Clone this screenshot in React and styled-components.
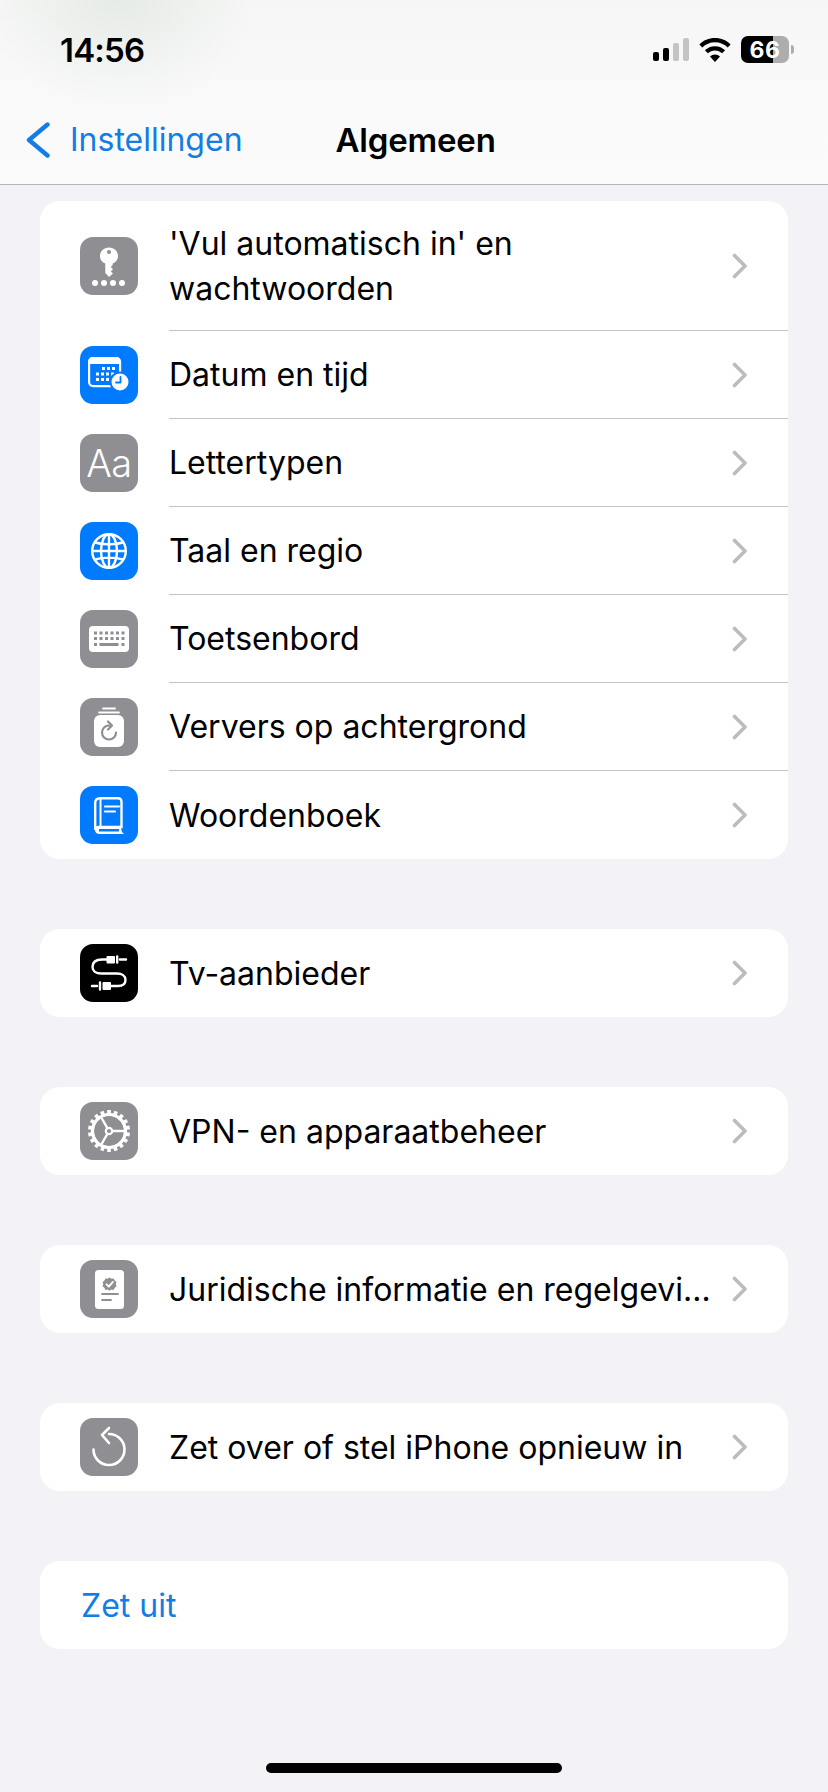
import React from 'react';
import styled, { createGlobalStyle } from 'styled-components';

const GlobalStyle = createGlobalStyle`
   html, body {
      margin: 0;
      padding: 0;
      background: #f2f2f7;
      font-family: Inter, "Liberation Sans", sans-serif;
   }
`;

const Page = styled.div`
   position: relative;
   width: 828px;
   height: 1792px;
   overflow: hidden;
   background: #f2f2f7;
`;

const Header = styled.header`
   height: 185px;
   box-sizing: border-box;
   border-bottom: 1px solid #b5b5ba;
   background:
      radial-gradient(ellipse 130px 110px at 120px 0px, rgba(208, 218, 208, 0.4), rgba(240, 243, 240, 0) 100%),
      linear-gradient(180deg, #f5f6f5 0%, #f9f9fa 50%, #fbfbfc 100%);
`;

const StatusBar = styled.div`
   height: 99px;
   box-sizing: border-box;
   padding: 0 34px 0 60px;
   display: flex;
   justify-content: space-between;
   align-items: center;
`;

const Time = styled.span`
   font-size: 33px;
   font-weight: 600;
   letter-spacing: -0.8px;
   color: #000;
`;

const StatusIcons = styled.div`
   display: flex;
   align-items: center;
   gap: 10px;
`;

const Signal = styled.div`
   display: flex;
   align-items: flex-end;
   gap: 4px;
   height: 23px;
`;

const SignalBar = styled.span`
   width: 6px;
   height: ${({ $h }) => $h}px;
   border-radius: 2px;
   background: ${({ $on }) => ($on ? '#000' : '#c4c4c4')};
`;

const Battery = styled.div`
   display: flex;
   align-items: center;
   gap: 2px;
`;

const BatteryBody = styled.div`
   width: 48px;
   height: 27px;
   border-radius: 7px;
   display: flex;
   align-items: center;
   justify-content: center;
   background: linear-gradient(90deg, #000 0%, #000 66%, #adadad 66%, #adadad 100%);
   color: #fff;
   font-size: 23px;
   font-weight: 700;
   letter-spacing: 0.5px;
`;

const BatteryTip = styled.span`
   width: 3px;
   height: 9px;
   border-radius: 0 3px 3px 0;
   background: #adadad;
`;

const NavBar = styled.nav`
   height: 85px;
   display: flex;
   align-items: center;
   padding: 0 0 4px 26px;
   box-sizing: border-box;
`;

const BackLink = styled.div`
   display: flex;
   align-items: center;
   gap: 20px;
   color: #147ce5;
   font-size: 32px;
`;

const Title = styled.h1`
   margin: 0 0 0 93px;
   font-size: 33px;
   font-weight: 600;
   letter-spacing: -0.2px;
   color: #000;
`;

const Content = styled.main`
   padding: 16px 40px 0;
   display: flex;
   flex-direction: column;
   gap: 70px;
`;

const Card = styled.section`
   background: #fff;
   border-radius: 20px;
   overflow: hidden;
`;

const Row = styled.div`
   display: flex;
   align-items: center;
   min-height: 88px;
   padding-left: 40px;
   ${({ $tall }) => $tall && 'height: 130px;'}
`;

const IconTile = styled.div`
   flex: none;
   width: 58px;
   height: 58px;
   border-radius: 13px;
   display: flex;
   align-items: center;
   justify-content: center;
   background: ${({ $bg }) => $bg};
   color: #fff;
`;

const RowBody = styled.div`
   flex: 1;
   align-self: stretch;
   margin-left: 31px;
   padding-right: 40px;
   display: flex;
   align-items: center;
   justify-content: space-between;
   border-bottom: ${({ $last }) => ($last ? 'none' : '1px solid #c6c6c8')};
`;

const Label = styled.span`
   padding-top: 2px;
   font-size: 32px;
   line-height: 44.5px;
   color: #000;
   white-space: pre-line;
`;

const ActionRow = styled.div`
   height: 88px;
   display: flex;
   align-items: center;
   padding-left: 41px;
   font-size: 32px;
   color: #147ce5;
`;

const HomeIndicator = styled.div`
   position: absolute;
   left: 266px;
   bottom: 19px;
   width: 296px;
   height: 10px;
   border-radius: 5px;
   background: #000;
`;

const AaGlyph = styled.span`
   font-size: 38px;
   font-weight: 300;
   letter-spacing: -0.5px;
`;

const Chevron = () => (
   <svg width="16" height="26" viewBox="0 0 16 26" fill="none">
      <path d="M2.5 2.5 L13 13 L2.5 23.5" stroke="#bcbcc0" strokeWidth="3.6" strokeLinecap="round" strokeLinejoin="round" />
   </svg>
);

const BackChevron = () => (
   <svg width="24" height="36" viewBox="0 0 24 36" fill="none">
      <path d="M21.5 2.5 L3 18 L21.5 33.5" stroke="#147ce5" strokeWidth="4.4" strokeLinecap="round" strokeLinejoin="round" />
   </svg>
);

const Wifi = () => (
   <svg width="32" height="24" viewBox="0 0 32 24">
      <path d="M16 0C9.8 0 4.3 2.4 0.4 6.4L3.3 9.4C6.5 6.2 11 4.2 16 4.2S25.5 6.2 28.7 9.4L31.6 6.4C27.7 2.4 22.2 0 16 0Z" fill="#000" />
      <path d="M16 8.2C12 8.2 8.5 9.8 5.9 12.3L8.9 15.3C10.7 13.5 13.2 12.4 16 12.4S21.3 13.5 23.1 15.3L26.1 12.3C23.5 9.8 20 8.2 16 8.2Z" fill="#000" />
      <path d="M16 16.4C14 16.4 12.3 17.2 11 18.4L16 24L21 18.4C19.7 17.2 18 16.4 16 16.4Z" fill="#000" />
   </svg>
);

const KeyIcon = () => (
   <svg width="36" height="42" viewBox="0 0 36 42" fill="#fff">
      <path fillRule="evenodd" d="M18 2.5C12.8 2.5 9 6.2 9 11C9 14.6 11.2 17.4 14.3 18.6V28L18 32L22 28.6L19.8 26.4L22 24.2L19.8 22L21.7 20V18.6C24.8 17.4 27 14.6 27 11C27 6.2 23.2 2.5 18 2.5ZM18 5A2 2 0 1 1 18 9A2 2 0 1 1 18 5Z" />
      <circle cx="4" cy="38" r="3" />
      <circle cx="13" cy="38" r="3" />
      <circle cx="22" cy="38" r="3" />
      <circle cx="31" cy="38" r="3" />
   </svg>
);

const CalendarIcon = () => (
   <svg width="44" height="36" viewBox="0 0 44 36" fill="none">
      <rect x="2.1" y="1.1" width="31" height="28" rx="4" stroke="#fff" strokeWidth="2.2" />
      <path d="M1 5C1 2 3 0 6 0H29C32 0 34 2 34 5V7H1Z" fill="#fff" />
      <g fill="#fff">
         {[
            [15, 10], [20, 10], [25, 10],
            [9, 15.5], [14, 15.5], [19, 15.5], [24, 15.5],
            [9, 21], [14, 21], [19, 21],
         ].map(([x, y]) => <rect key={`${x}-${y}`} x={x} y={y} width="3" height="3" />)}
      </g>
      <circle cx="33" cy="25" r="10.5" fill="#007aff" />
      <circle cx="33" cy="25" r="8.5" fill="#fff" />
      <path d="M33.5 20V25.5H29" stroke="#007aff" strokeWidth="1.8" strokeLinecap="round" strokeLinejoin="round" />
   </svg>
);

const GlobeIcon = () => (
   <svg width="38" height="38" viewBox="0 0 38 38" fill="none" stroke="#fff" strokeWidth="2.4">
      <circle cx="19" cy="19" r="16.8" />
      <ellipse cx="19" cy="19" rx="8" ry="16.8" />
      <path d="M19 2V36M2 19H36M5 10.5C13 13 25 13 33 10.5M5 27.5C13 25 25 25 33 27.5" />
   </svg>
);

const KeyboardIcon = () => (
   <svg width="40" height="26" viewBox="0 0 40 26">
      <rect width="40" height="26" rx="4" fill="#fff" />
      <g fill="#8e8e93">
         {[5, 10.5, 16, 21.5, 27, 32.5].map((x) => <rect key={`a${x}`} x={x} y="5.5" width="3" height="3" />)}
         {[5, 10.5, 16, 21.5, 27, 32.5].map((x) => <rect key={`b${x}`} x={x} y="11" width="3" height="3" />)}
         <rect x="5" y="17" width="3" height="3" />
         <rect x="10.5" y="17" width="19" height="3" />
         <rect x="32.5" y="17" width="3" height="3" />
      </g>
   </svg>
);

const RefreshIcon = () => (
   <svg width="30" height="40" viewBox="0 0 30 40" fill="none">
      <path d="M9 1.5H21M5 5.5H25" stroke="#fff" strokeWidth="1.8" strokeLinecap="round" />
      <rect y="8" width="30" height="32" rx="6" fill="#fff" />
      <path d="M22 25.5A7 7 0 1 1 15 18.5H17" stroke="#8e8e93" strokeWidth="2.2" strokeLinecap="round" />
      <path d="M14 14.5L18 18.5L14 22.5" stroke="#8e8e93" strokeWidth="2.2" strokeLinecap="round" strokeLinejoin="round" />
   </svg>
);

const BookIcon = () => (
   <svg width="30" height="37" viewBox="0 0 30 37" fill="none">
      <path d="M6 1.2H24C26.2 1.2 27.5 2.6 27.5 4.8V30H5C2.8 30 1.2 31.4 1.2 33M1.2 33V6C1.2 3 3 1.2 6 1.2" stroke="#fff" strokeWidth="2.4" />
      <path d="M6.5 2V29" stroke="#fff" strokeWidth="2" />
      <path d="M1 33C1 35.5 3 37 5.5 37H30C28 35.5 27 33.5 27 30H5C3 30 1 31 1 33Z" fill="#fff" />
      <path d="M5 33.2H25" stroke="#007aff" strokeWidth="2.4" />
      <path d="M11 9.5H25M11 14.5H21" stroke="#fff" strokeWidth="2.2" strokeLinecap="round" />
   </svg>
);

const CableIcon = () => (
   <svg width="38" height="40" viewBox="0 0 38 40" fill="none" stroke="#fff" strokeWidth="2.4" strokeLinecap="round">
      <path d="M17 6.5H12C5 6.5 2.5 10 2.5 14C2.5 18 6 20.5 11 20.5H27C32 20.5 35.5 23 35.5 27C35.5 31 33 33 28 33H21" />
      <rect x="16.5" y="3" width="8.5" height="7.5" rx="1" fill="#fff" stroke="none" />
      <path d="M27.2 3.5V9.5M30 6.5H36" />
      <rect x="12.5" y="29" width="8.5" height="8" rx="1" fill="#fff" stroke="none" />
      <path d="M2 33H7M10 29.5V36.5" />
   </svg>
);

const GearIcon = () => {
   const teeth = Array.from({ length: 18 }, (_, i) => i * 20);
   return (
      <svg width="44" height="44" viewBox="0 0 44 44" fill="none" stroke="#fff">
         {teeth.map((deg) => (
            <path key={deg} d="M22 1V7" strokeWidth="3.6" transform={`rotate(${deg} 22 22)`} />
         ))}
         <circle cx="22" cy="22" r="16.5" strokeWidth="3.2" />
         <circle cx="22" cy="22" r="3.2" strokeWidth="2.2" />
         <path d="M25.2 22H38M20.4 24.8L14 36M20.4 19.2L14 8" strokeWidth="2.4" />
      </svg>
   );
};

const LegalIcon = () => (
   <svg width="29" height="39" viewBox="0 0 29 39">
      <rect width="29" height="39" rx="3.5" fill="#fff" />
      <g transform="translate(3.3 3.1) scale(0.75)">
         <path d="M15 6L17.6 7.6L20.6 7.2L21.8 10L24.2 11.8L23.4 14.8L24.2 17.8L21.8 19.6L20.6 22.4L17.6 22L15 23.6L12.4 22L9.4 22.4L8.2 19.6L5.8 17.8L6.6 14.8L5.8 11.8L8.2 10L9.4 7.2L12.4 7.6Z" fill="#8e8e93" />
         <path d="M11 15L14 18L19.5 11.8" fill="none" stroke="#fff" strokeWidth="2.6" strokeLinecap="round" strokeLinejoin="round" />
      </g>
      <path d="M7 24H23M7 30H16" stroke="#8e8e93" strokeWidth="1.8" strokeLinecap="round" />
   </svg>
);

const ResetIcon = () => (
   <svg width="36" height="44" viewBox="0 0 36 44" fill="none" stroke="#fff" strokeWidth="2.6" strokeLinecap="round" strokeLinejoin="round">
      <path d="M18 9A15.5 15.5 0 1 1 2.5 24.5" />
      <path d="M18 3L11 10L18 18" />
   </svg>
);

const generalRows = [
   { label: "'Vul automatisch in' en\nwachtwoorden", bg: '#8e8e93', icon: <KeyIcon />, tall: true },
   { label: 'Datum en tijd', bg: '#007aff', icon: <CalendarIcon /> },
   { label: 'Lettertypen', bg: '#8e8e93', icon: <AaGlyph>Aa</AaGlyph> },
   { label: 'Taal en regio', bg: '#007aff', icon: <GlobeIcon /> },
   { label: 'Toetsenbord', bg: '#8e8e93', icon: <KeyboardIcon /> },
   { label: 'Ververs op achtergrond', bg: '#8e8e93', icon: <RefreshIcon /> },
   { label: 'Woordenboek', bg: '#007aff', icon: <BookIcon /> },
];

const singleRows = [
   { label: 'Tv-aanbieder', bg: '#000', icon: <CableIcon /> },
   { label: 'VPN- en apparaatbeheer', bg: '#8e8e93', icon: <GearIcon /> },
   { label: 'Juridische informatie en regelgevi…', bg: '#8e8e93', icon: <LegalIcon /> },
   { label: 'Zet over of stel iPhone opnieuw in', bg: '#8e8e93', icon: <ResetIcon /> },
];

const SettingsRow = ({ label, bg, icon, tall, last }) => (
   <Row $tall={tall}>
      <IconTile $bg={bg}>{icon}</IconTile>
      <RowBody $last={last}>
         <Label>{label}</Label>
         <Chevron />
      </RowBody>
   </Row>
);

const App = () => (
   <Page>
      <GlobalStyle />
      <Header>
         <StatusBar>
            <Time>14:56</Time>
            <StatusIcons>
               <Signal>
                  <SignalBar $h={9} $on />
                  <SignalBar $h={13} $on />
                  <SignalBar $h={18} />
                  <SignalBar $h={23} />
               </Signal>
               <Wifi />
               <Battery>
                  <BatteryBody>66</BatteryBody>
                  <BatteryTip />
               </Battery>
            </StatusIcons>
         </StatusBar>
         <NavBar>
            <BackLink>
               <BackChevron />
               Instellingen
            </BackLink>
            <Title>Algemeen</Title>
         </NavBar>
      </Header>
      <Content>
         <Card>
            {generalRows.map((row, index) => (
               <SettingsRow key={row.label} {...row} last={index === generalRows.length - 1} />
            ))}
         </Card>
         {singleRows.map((row) => (
            <Card key={row.label}>
               <SettingsRow {...row} last />
            </Card>
         ))}
         <Card>
            <ActionRow>Zet uit</ActionRow>
         </Card>
      </Content>
      <HomeIndicator />
   </Page>
);

export default App;
